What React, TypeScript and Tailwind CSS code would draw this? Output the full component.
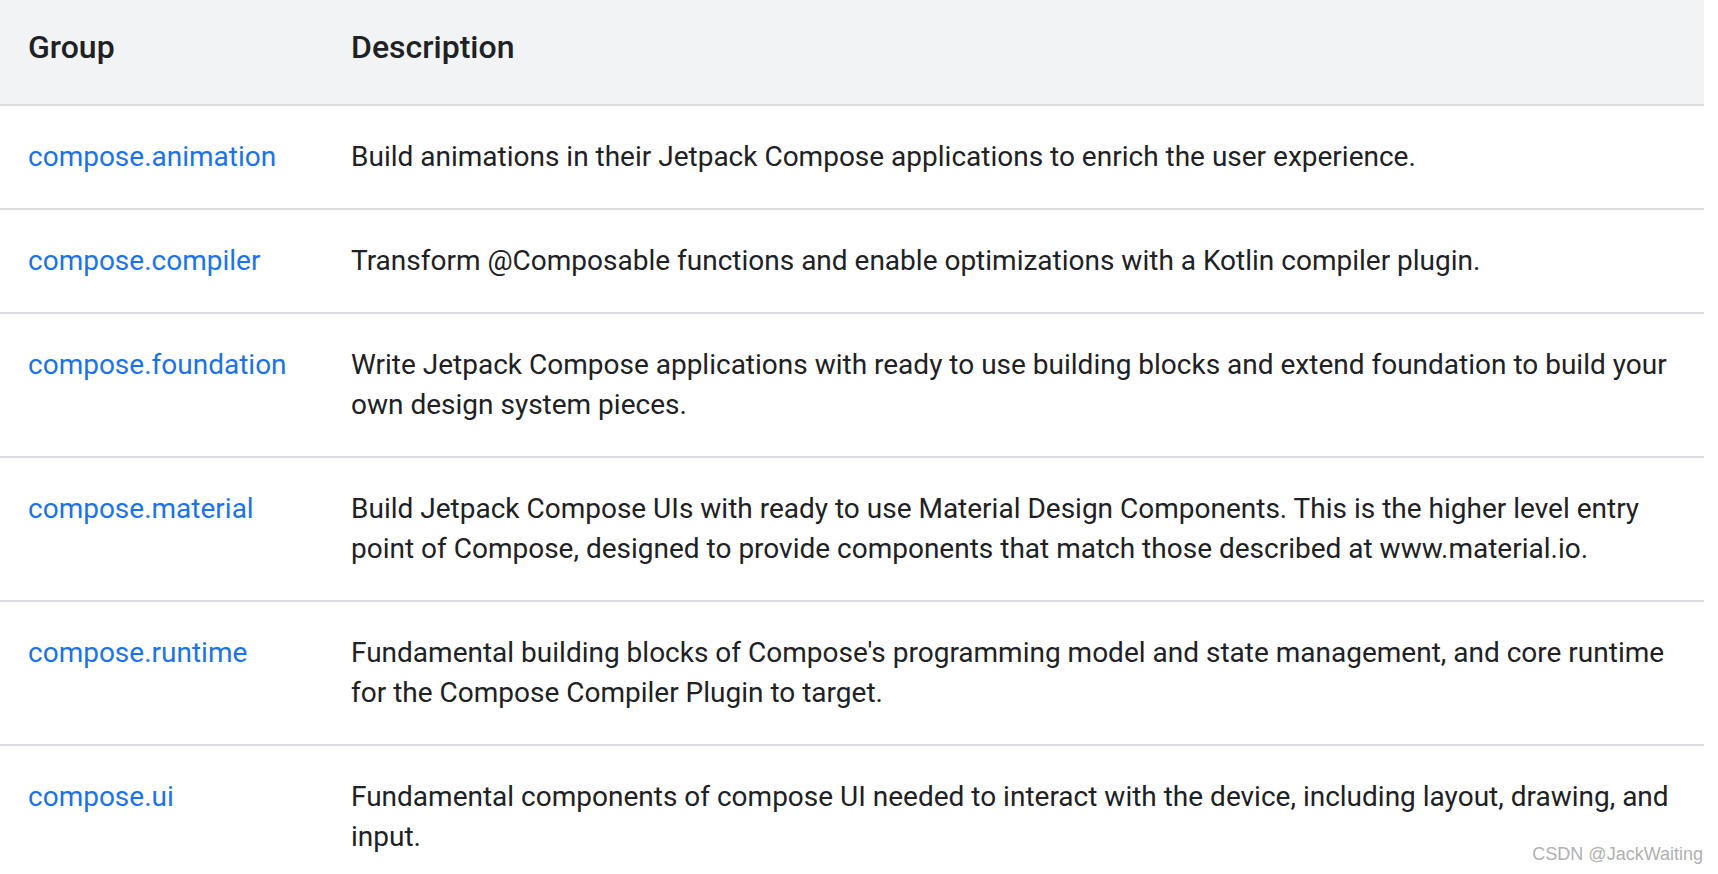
import React from 'react';

type Row = { group: string; description: string };

const rows: Row[] = [
  { group: 'compose.animation', description: 'Build animations in their Jetpack Compose applications to enrich the user experience.' },
  { group: 'compose.compiler', description: 'Transform @Composable functions and enable optimizations with a Kotlin compiler plugin.' },
  { group: 'compose.foundation', description: 'Write Jetpack Compose applications with ready to use building blocks and extend foundation to build your own design system pieces.' },
  { group: 'compose.material', description: 'Build Jetpack Compose UIs with ready to use Material Design Components. This is the higher level entry point of Compose, designed to provide components that match those described at www.material.io.' },
  { group: 'compose.runtime', description: "Fundamental building blocks of Compose's programming model and state management, and core runtime for the Compose Compiler Plugin to target." },
  { group: 'compose.ui', description: 'Fundamental components of compose UI needed to interact with the device, including layout, drawing, and input.' },
];

const App: React.FC = () => {
  return (
    <div className="relative h-screen bg-white font-['Roboto',sans-serif] text-[#202124] overflow-hidden">
      <table className="w-[1704px] border-collapse text-left text-[28px] leading-[40px]">
        <thead>
          <tr className="bg-[#f1f3f4] border-b-2 border-[#dadce0]">
            <th className="w-[351px] h-[105px] pl-[28px] pb-[11px] text-[32px] font-medium align-middle">Group</th>
            <th className="pr-[28px] pb-[11px] text-[32px] font-medium align-middle">Description</th>
          </tr>
        </thead>
        <tbody>
          {rows.map(row => (
            <tr key={row.group} className="border-b-2 border-[#dadce0]">
              <td className="pl-[28px] py-[31px] align-top text-[#1a73e8]">{row.group}</td>
              <td className="pr-[28px] py-[31px] align-top">{row.description}</td>
            </tr>
          ))}
        </tbody>
      </table>
      <div className="absolute right-[15px] bottom-[6px] font-['Liberation_Sans',sans-serif] text-[18px] text-[#b0b0b0]">
        CSDN @JackWaiting
      </div>
    </div>
  );
};

export default App;
